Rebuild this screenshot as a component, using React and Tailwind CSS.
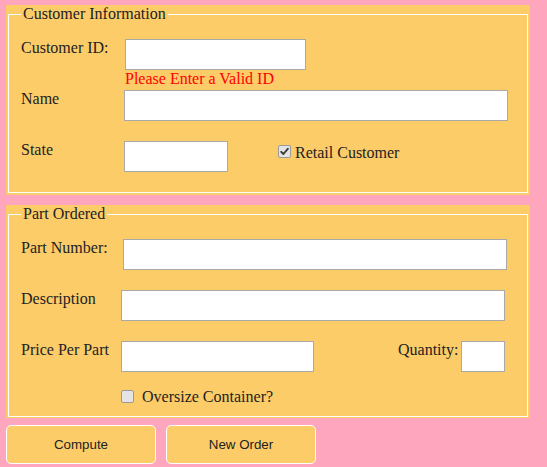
const serif = "font-['Liberation_Serif','Times_New_Roman',serif]";

const Box = ({ checked }) => (
  <span className="flex w-[13px] h-[13px] shrink-0 items-center justify-center rounded-[2px] border border-[#9a9a9a] bg-[#e4e4e4]">
    {checked && (
      <svg width="9" height="9" viewBox="0 0 9 9">
        <path
          d="M1.2 4.8 L3.4 7 L7.8 1.8"
          fill="none"
          stroke="#3c3c3c"
          strokeWidth="1.9"
          strokeLinecap="round"
          strokeLinejoin="round"
        />
      </svg>
    )}
  </span>
);

const Field = ({ className }) => (
  <input
    type="text"
    className={`h-[31px] shrink-0 border border-[#a9a9a9] bg-white outline-none ${className}`}
  />
);

export default function App() {
  return (
    <div
      className={`min-h-screen w-[547px] bg-[#ffa6bf] px-[6px] pt-[5px] text-[16px] leading-[18px] text-[#222] ${serif}`}
    >
      {/* Customer */}
      <div className="w-[524px] bg-[#fccc69] px-[2px] pb-[2px]">
        <fieldset className="border border-white px-3 pt-[16px] pb-[20px]">
          <legend className="px-[2px] leading-[18px]">Customer Information</legend>

          <div className="flex items-start">
            <label className="w-[104px] shrink-0">Customer ID:</label>
            <Field className="w-[181px]" />
          </div>
          <div className="ml-[104px] text-[#ff0000]">Please Enter a Valid ID</div>

          <div className="mt-[2px] flex items-start">
            <label className="w-[103px] shrink-0">Name</label>
            <Field className="w-[384px]" />
          </div>

          <div className="mt-[20px] flex items-start">
            <label className="w-[103px] shrink-0">State</label>
            <Field className="w-[104px]" />
            <div className="ml-[50px] flex items-start">
              <span className="mt-[4px]">
                <Box checked />
              </span>
              <span className="ml-[4px] mt-[3px]">Retail Customer</span>
            </div>
          </div>
        </fieldset>
      </div>

      {/* Part */}
      <div className="mt-[10px] w-[524px] bg-[#fccc69] px-[2px] pb-[1px]">
        <fieldset className="border border-white px-3 pt-[16px] pb-[10px]">
          <legend className="px-[2px] leading-[18px]">Part Ordered</legend>

          <div className="flex items-start">
            <label className="w-[102px] shrink-0">Part Number:</label>
            <Field className="w-[384px]" />
          </div>

          <div className="mt-[20px] flex items-start">
            <label className="w-[100px] shrink-0">Description</label>
            <Field className="w-[384px]" />
          </div>

          <div className="mt-[20px] flex items-start">
            <label className="w-[100px] shrink-0">Price Per Part</label>
            <Field className="w-[193px]" />
            <label className="ml-[84px]">Quantity:</label>
            <Field className="ml-[3px] w-[44px]" />
          </div>

          <div className="ml-[100px] mt-[16px] flex items-start">
            <span className="mt-[2px]">
              <Box />
            </span>
            <span className="ml-[8px]">Oversize Container?</span>
          </div>
        </fieldset>
      </div>

      {/* Buttons */}
      <div className="mt-[7px] flex gap-[10px] font-['Liberation_Sans',Arial,sans-serif] text-[13.33px] text-[#222]">
        <button className="h-[39px] w-[150px] rounded-[5px] border border-white bg-[#fccc69]">
          Compute
        </button>
        <button className="h-[39px] w-[150px] rounded-[5px] border border-white bg-[#fccc69]">
          New Order
        </button>
      </div>
    </div>
  );
}
